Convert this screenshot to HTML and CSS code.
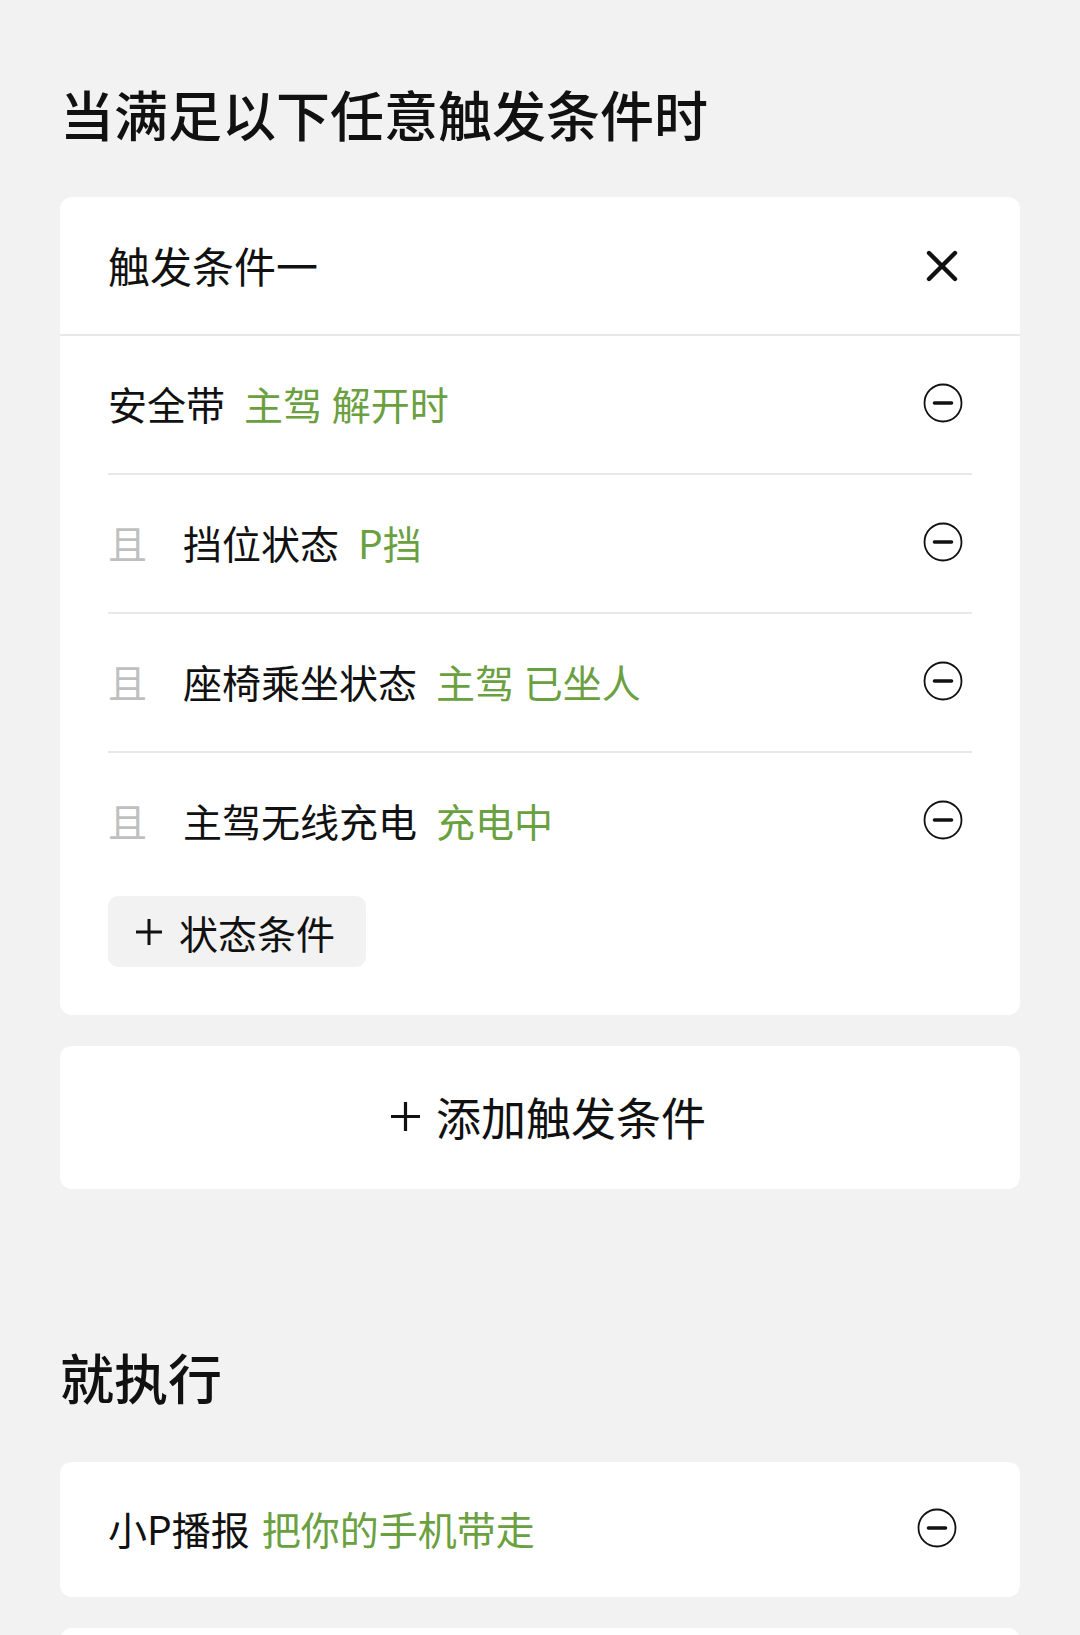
FILE: index.html
```html
<!DOCTYPE html>
<html lang="zh-CN">
<head>
    <meta charset="UTF-8">
    <meta name="viewport" content="width=device-width, initial-scale=1.0">
    <title>智能场景</title>
    <link rel="stylesheet" href="styles.css">
</head>
<body>
    <div class="page">
        <h1 class="section-title">当满足以下任意触发条件时</h1>

        <div class="card">
            <div class="card-head">
                <span class="card-name">触发条件一</span>
                <svg class="icon-close" width="34" height="34" viewBox="0 0 34 34">
                    <path d="M4 4 L30 30 M30 4 L4 30" stroke="#111" stroke-width="4.4" stroke-linecap="round" fill="none"/>
                </svg>
            </div>
            <div class="rows">
                <div class="row">
                    <span class="label">安全带</span>
                    <span class="val">主驾 解开时</span>
                    <svg class="icon-minus" width="40" height="40" viewBox="0 0 40 40">
                        <circle cx="20" cy="20" r="18.5" stroke="#111" stroke-width="1.8" fill="none"/>
                        <path d="M11.5 20 H28.5" stroke="#111" stroke-width="3.6" stroke-linecap="round"/>
                    </svg>
                </div>
                <div class="row">
                    <span class="and">且</span>
                    <span class="label">挡位状态</span>
                    <span class="val">P挡</span>
                    <svg class="icon-minus" width="40" height="40" viewBox="0 0 40 40">
                        <circle cx="20" cy="20" r="18.5" stroke="#111" stroke-width="1.8" fill="none"/>
                        <path d="M11.5 20 H28.5" stroke="#111" stroke-width="3.6" stroke-linecap="round"/>
                    </svg>
                </div>
                <div class="row">
                    <span class="and">且</span>
                    <span class="label">座椅乘坐状态</span>
                    <span class="val">主驾 已坐人</span>
                    <svg class="icon-minus" width="40" height="40" viewBox="0 0 40 40">
                        <circle cx="20" cy="20" r="18.5" stroke="#111" stroke-width="1.8" fill="none"/>
                        <path d="M11.5 20 H28.5" stroke="#111" stroke-width="3.6" stroke-linecap="round"/>
                    </svg>
                </div>
                <div class="row">
                    <span class="and">且</span>
                    <span class="label">主驾无线充电</span>
                    <span class="val">充电中</span>
                    <svg class="icon-minus" width="40" height="40" viewBox="0 0 40 40">
                        <circle cx="20" cy="20" r="18.5" stroke="#111" stroke-width="1.8" fill="none"/>
                        <path d="M11.5 20 H28.5" stroke="#111" stroke-width="3.6" stroke-linecap="round"/>
                    </svg>
                </div>
            </div>
            <button class="add-state">
                <svg width="28" height="28" viewBox="0 0 28 28">
                    <path d="M14 1 V27 M1 14 H27" stroke="#111" stroke-width="3" fill="none"/>
                </svg>
                <span>状态条件</span>
            </button>
        </div>

        <div class="card add-trigger">
            <svg width="31" height="31" viewBox="0 0 31 31">
                <path d="M15.5 1 V30 M1 15.5 H30" stroke="#111" stroke-width="3.2" fill="none"/>
            </svg>
            <span>添加触发条件</span>
        </div>

        <h1 class="section-title then">就执行</h1>

        <div class="card action">
            <span class="label">小P播报</span>
            <span class="val">把你的手机带走</span>
            <svg class="icon-minus" width="40" height="40" viewBox="0 0 40 40">
                <circle cx="20" cy="20" r="18.5" stroke="#111" stroke-width="1.8" fill="none"/>
                <path d="M11.5 20 H28.5" stroke="#111" stroke-width="3.6" stroke-linecap="round"/>
            </svg>
        </div>

        <div class="card action"></div>
    </div>
</body>
</html>
```

FILE: styles.css
```css
body { margin: 0; background-color: #f2f2f2; color: #111; font-family: "Noto Sans CJK SC", "Noto Sans", sans-serif; }
.page { padding: 0 60px; }

.section-title { margin: 0; padding-top: 76px; font-size: 54px; line-height: 76px; font-weight: 500; }
.section-title.then { padding-top: 150px; margin-bottom: 47px; }

.card { background-color: #fff; border-radius: 12px; margin-top: 45px; }
.card + .card { margin-top: 31px; }
.card:first-of-type { padding-bottom: 48px; }

.card-head { display: flex; align-items: center; justify-content: space-between; height: 137px; padding: 0 61px 0 48px; border-bottom: 2px solid #e8e8e8; }
.card-name { font-size: 42px; padding-bottom: 3px; }
.icon-close { display: block; }

.rows { padding: 0 48px; }
.row { display: flex; align-items: center; box-sizing: border-box; height: 139px; padding-bottom: 4px; font-size: 39px; border-bottom: 2px solid #e8e8e8; }
.row:last-child { border-bottom: none; height: 137px; }
.and { width: 75px; color: #bfbfbf; flex-shrink: 0; }
.val { color: #6aa040; margin-left: 19px; word-spacing: 1px; }
.icon-minus { display: block; margin-left: auto; margin-right: 9px; }

.add-state { display: flex; align-items: center; gap: 16px; margin: 6px 0 0 48px; height: 71px; padding: 0 31px 0 27px; border: none; border-radius: 10px; background-color: #f2f2f2; font-family: inherit; font-size: 39px; color: #111; }

.add-trigger { display: flex; align-items: center; justify-content: center; gap: 15px; height: 143px; padding-left: 16px; padding-bottom: 3px; box-sizing: border-box; font-size: 45px; }

.action { display: flex; align-items: center; height: 135px; padding: 0 63px 3px 48px; box-sizing: border-box; font-size: 39px; margin-top: 0; }
.action .val { margin-left: 12px; }
.action .icon-minus { margin-right: 0; }
.action + .action { margin-top: 31px; }
```
